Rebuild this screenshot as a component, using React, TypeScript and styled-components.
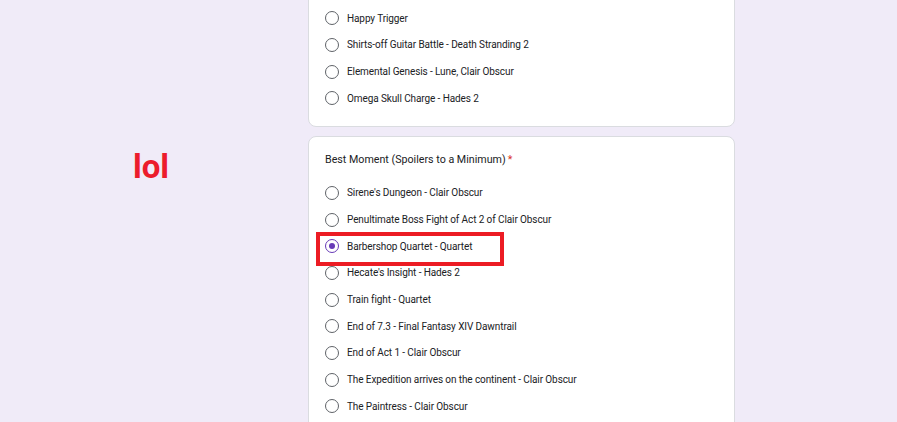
import styled, { createGlobalStyle } from "styled-components";

/**
 * >>> Style
 */
const GlobalStyle = createGlobalStyle`
  html, body {
    margin: 0;
    padding: 0;
    background-color: #f0ebf8;
  }
  * {
    box-sizing: border-box;
  }
`;
const Page = styled.div`
  display: flex;

  width: 897px;
  height: 422px;
  overflow: hidden;

  background-color: #f0ebf8;
  font-family: Roboto, "Liberation Sans", sans-serif;
`;
const Gutter = styled.aside`
  width: 308px;
  flex-shrink: 0;

  padding: 147px 0 0 133px;
`;
const Lol = styled.span`
  font-family: Roboto, "Liberation Sans", sans-serif;
  font-weight: 700;
  font-size: 33px;
  line-height: 40px;
  color: #ec1c2c;
`;
const Column = styled.main`
  width: 427px;

  display: flex;
  flex-direction: column;
  gap: 9px;

  margin-top: -26px;
`;
const Card = styled.section<{ padTop?: number }>`
  position: relative;

  background-color: #ffffff;
  border: 1px solid #dadce0;
  border-radius: 8px;

  padding: ${(p) => p.padTop ?? 14}px 16px 14px 16px;
`;
const Title = styled.h2`
  margin: 0 0 11px 0;

  font-size: 10.7px;
  font-weight: 400;
  line-height: 18px;
  color: #202124;
  span {
    color: #d93025;
    margin-left: 2px;
  }
`;
const Option = styled.label`
  display: flex;
  align-items: center;
  gap: 8px;

  height: 26.67px;

  font-size: 10px;
  letter-spacing: -0.1px;
  color: #202124;
`;
const Radio = styled.span<{ checked?: boolean }>`
  width: 14px;
  height: 14px;

  display: flex;
  align-items: center;
  justify-content: center;

  border: 1.5px solid ${(p) => (p.checked ? "#673ab7" : "#5f6368")};
  border-radius: 50%;
  &::after {
    content: "";
    display: ${(p) => (p.checked ? "block" : "none")};
    width: 6px;
    height: 6px;

    background-color: #673ab7;
    border-radius: 50%;
  }
`;
const Highlight = styled.div`
  position: absolute;
  top: 95px;
  left: 7px;

  width: 188px;
  height: 34px;

  border: 4px solid #ec1c24;
  pointer-events: none;
`;
// <<< Style

const songs = [
  "Happy Trigger",
  "Shirts-off Guitar Battle - Death Stranding 2",
  "Elemental Genesis - Lune, Clair Obscur",
  "Omega Skull Charge - Hades 2",
];

const moments = [
  "Sirene's Dungeon - Clair Obscur",
  "Penultimate Boss Fight of Act 2 of Clair Obscur",
  "Barbershop Quartet - Quartet",
  "Hecate's Insight - Hades 2",
  "Train fight - Quartet",
  "End of 7.3 - Final Fantasy XIV Dawntrail",
  "End of Act 1 - Clair Obscur",
  "The Expedition arrives on the continent - Clair Obscur",
  "The Paintress - Clair Obscur",
];

const App = () => {
  return (
    <Page>
      <GlobalStyle />
      <Gutter>
        <Lol>lol</Lol>
      </Gutter>
      <Column>
        <Card padTop={30}>
          {songs.map((s) => (
            <Option key={s}>
              <Radio />
              {s}
            </Option>
          ))}
        </Card>
        <Card>
          <Title>
            Best Moment (Spoilers to a Minimum)<span>*</span>
          </Title>
          {moments.map((m) => (
            <Option key={m}>
              <Radio checked={m.startsWith("Barbershop")} />
              {m}
            </Option>
          ))}
          <Highlight />
        </Card>
      </Column>
    </Page>
  );
};

export default App;
